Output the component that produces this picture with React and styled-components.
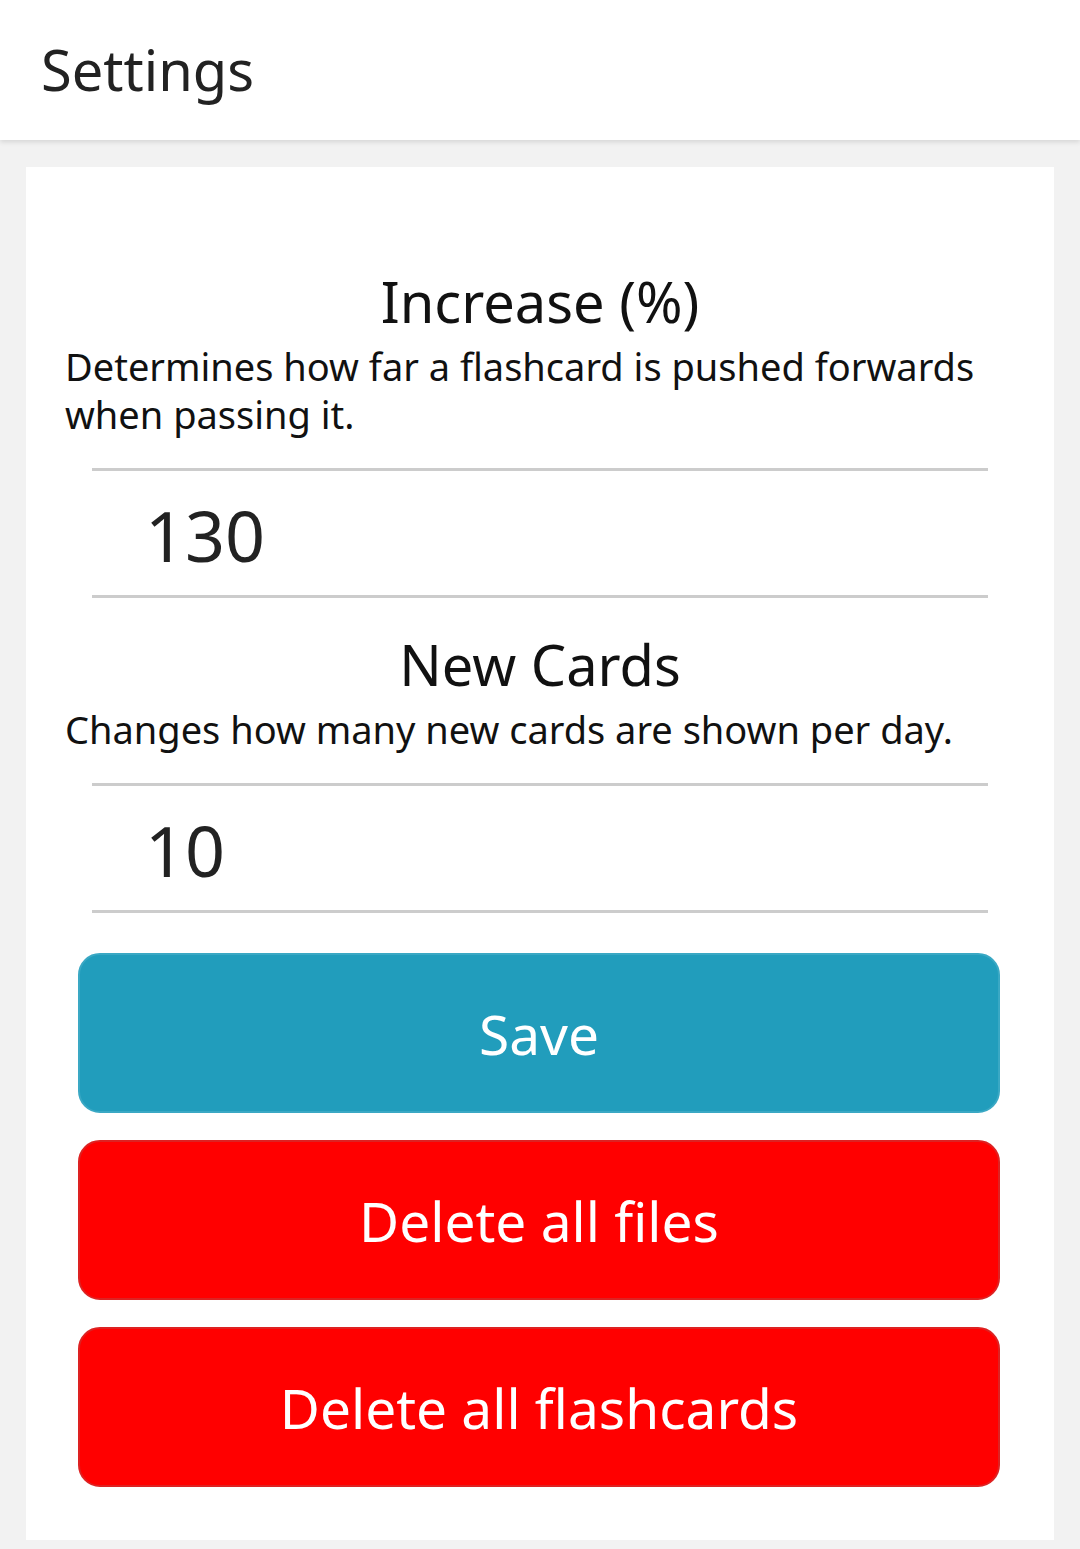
import React, { useState } from 'react'
import styled, { createGlobalStyle } from 'styled-components'

const GlobalStyle = createGlobalStyle`
  html, body {
    margin: 0;
    padding: 0;
    background: #f2f2f2;
    font-family: "Noto Sans", "Open Sans", sans-serif;
  }
  * { box-sizing: border-box; }
`

const Page = styled.div`
  min-height: 1549px;
  padding-bottom: 8px;
`

const Header = styled.header`
  height: 140px;
  background: #ffffff;
  padding-left: 41px;
  box-shadow: 0 2px 5px rgba(0, 0, 0, 0.12);
  position: relative;
`

const HeaderTitle = styled.h1`
  margin: 0;
  font-size: 56px;
  font-weight: 400;
  line-height: 138px;
  color: #222;
`

const Card = styled.main`
  margin: 27px 26px 0;
  background: #ffffff;
  padding: 101px 0 53px;
`

const Section = styled.section`
  display: flex;
  flex-direction: column;
  margin-top: ${p => p.first ? '0' : '33px'};
`

const Title = styled.h2`
  margin: 0;
  text-align: center;
  font-size: 56px;
  font-weight: 400;
  line-height: 66px;
  color: #111;
`

const Description = styled.p`
  margin: 8px 0 0;
  padding: 0 30px 0 39px;
  font-size: 38px;
  line-height: 48px;
  color: #111;
`

const NumberInput = styled.input`
  display: block;
  margin: 30px 66px 0;
  height: 130px;
  border: none;
  border-top: 3px solid #cccccc;
  border-bottom: 3px solid #cccccc;
  padding: 4px 0 0 53px;
  font-family: inherit;
  font-size: 70px;
  color: #222;
  background: transparent;
  outline: none;
  width: calc(100% - 132px);
`

const Buttons = styled.div`
  display: flex;
  flex-direction: column;
  gap: 27px;
  margin: 40px 54px 0 52px;
`

const Button = styled.button`
  height: 160px;
  border-radius: 22px;
  border: 2px solid ${p => p.danger ? '#dd2222' : '#3aa8c4'};
  background: ${p => p.danger ? '#ff0000' : '#219dbc'};
  color: #ffffff;
  font-family: inherit;
  font-size: 55px;
  font-weight: 400;
  cursor: pointer;
`

const App = () => {
  const [increase, setIncrease] = useState('130')
  const [newCards, setNewCards] = useState('10')

  return <>
    <GlobalStyle />
    <Page>
      <Header>
        <HeaderTitle>Settings</HeaderTitle>
      </Header>
      <Card>
        <Section first>
          <Title>Increase (%)</Title>
          <Description>Determines how far a flashcard is pushed forwards when passing it.</Description>
          <NumberInput value={increase} onChange={e => setIncrease(e.target.value)} />
        </Section>
        <Section>
          <Title>New Cards</Title>
          <Description>Changes how many new cards are shown per day.</Description>
          <NumberInput value={newCards} onChange={e => setNewCards(e.target.value)} />
        </Section>
        <Buttons>
          <Button>Save</Button>
          <Button danger>Delete all files</Button>
          <Button danger>Delete all flashcards</Button>
        </Buttons>
      </Card>
    </Page>
  </>
}

export default App
